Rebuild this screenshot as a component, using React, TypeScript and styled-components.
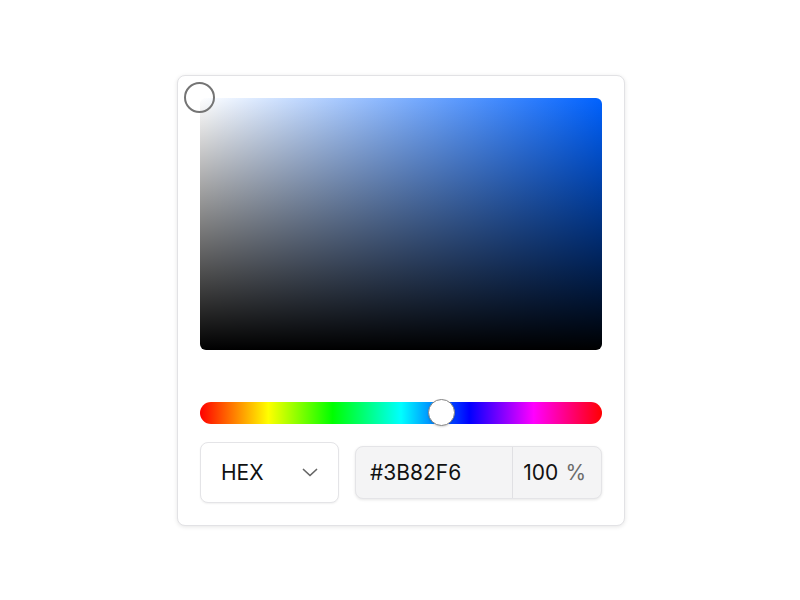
import styled, { createGlobalStyle } from 'styled-components';

const GlobalStyle = createGlobalStyle`
    * {
        box-sizing: border-box;
    }
    html, body {
        margin: 0;
        padding: 0;
        background: #ffffff;
        font-family: Inter, "Open Sans", "Liberation Sans", sans-serif;
    }
`

const Page = styled.div`
    width: 100vw;
    height: 100vh;
    padding-left: 2px;
    display: flex;
    align-items: center;
    justify-content: center;
`
const Picker = styled.div`
    width: 448px;
    padding: 22px;
    background: #ffffff;
    border: 1px solid #e2e2e5;
    border-radius: 8px;
    box-shadow: 0 1px 4px rgba(0, 0, 0, 0.1);
    display: flex;
    flex-direction: column;
`
const SatArea = styled.div<{ $hue: number }>`
    position: relative;
    width: 100%;
    height: 252px;
    border-radius: 6px;
    background:
        linear-gradient(to top, #000000, rgba(0, 0, 0, 0)),
        linear-gradient(to right, #ffffff, hsl(${(p) => p.$hue}, 100%, 50%));
`
const SatThumb = styled.div`
    position: absolute;
    width: 31px;
    height: 31px;
    margin: -16px 0 0 -16px;
    border-radius: 50%;
    border: 2px solid #747474;
`
const HueTrack = styled.div`
    position: relative;
    margin-top: 52px;
    height: 22px;
    border-radius: 11px;
    background: linear-gradient(
        to right,
        #ff0000 0%,
        #ffff00 17%,
        #00ff00 33%,
        #00ffff 50%,
        #0000ff 67%,
        #ff00ff 83%,
        #ff0000 100%
    );
`
const HueThumb = styled.div`
    position: absolute;
    top: 50%;
    width: 27px;
    height: 27px;
    margin: -13.5px 0 0 -13.5px;
    border-radius: 50%;
    background: #ffffff;
    border: 1.5px solid #858585;
    box-shadow: 0 1px 2px rgba(0, 0, 0, 0.15);
`
const Controls = styled.div`
    margin-top: 18px;
    display: flex;
    align-items: center;
    gap: 16px;
`
const FormatSelect = styled.div`
    width: 139px;
    height: 61px;
    padding: 0 20px 0 20px;
    display: flex;
    align-items: center;
    justify-content: space-between;
    border: 1px solid #e4e4e7;
    border-radius: 8px;
    background: #ffffff;
    box-shadow: 0 1px 2px rgba(0, 0, 0, 0.06);
    font-size: 21px;
    color: #111111;
`
const ValueGroup = styled.div`
    flex: 1;
    height: 53px;
    display: flex;
    border: 1px solid #e4e4e7;
    border-radius: 8px;
    background: #f4f4f5;
    box-shadow: 0 1px 3px rgba(0, 0, 0, 0.1);
    overflow: hidden;
`
const HexField = styled.div`
    width: 157px;
    padding-left: 14px;
    display: flex;
    align-items: center;
    font-size: 21px;
    color: #111111;
    border-right: 1px solid #e0e0e3;
`
const AlphaField = styled.div`
    flex: 1;
    display: flex;
    align-items: center;
    justify-content: flex-end;
    padding-right: 15px;
    gap: 7px;
    font-size: 21px;
    color: #111111;
`
const Unit = styled.span`
    color: #6b6b6b;
`

const Chevron = () => (
    <svg width="16" height="9" viewBox="0 0 16 9" fill="none">
        <path d="M1.5 1.5 L8 7.5 L14.5 1.5" stroke="#666" strokeWidth="1.7" strokeLinecap="round" strokeLinejoin="round" />
    </svg>
);

const hue = 217;
const sat = { x: 0, y: 0 };

function App() {
    return (
        <Page>
            <GlobalStyle />
            <Picker>
                <SatArea $hue={hue}>
                    <SatThumb style={{ left: `${sat.x}%`, top: `${sat.y}%` }} />
                </SatArea>
                <HueTrack>
                    <HueThumb style={{ left: `${(hue / 360) * 100 - 0.3}%` }} />
                </HueTrack>
                <Controls>
                    <FormatSelect>
                        <span>HEX</span>
                        <Chevron />
                    </FormatSelect>
                    <ValueGroup>
                        <HexField>#3B82F6</HexField>
                        <AlphaField>
                            <span>100</span>
                            <Unit>%</Unit>
                        </AlphaField>
                    </ValueGroup>
                </Controls>
            </Picker>
        </Page>
    );
}

export default App;
